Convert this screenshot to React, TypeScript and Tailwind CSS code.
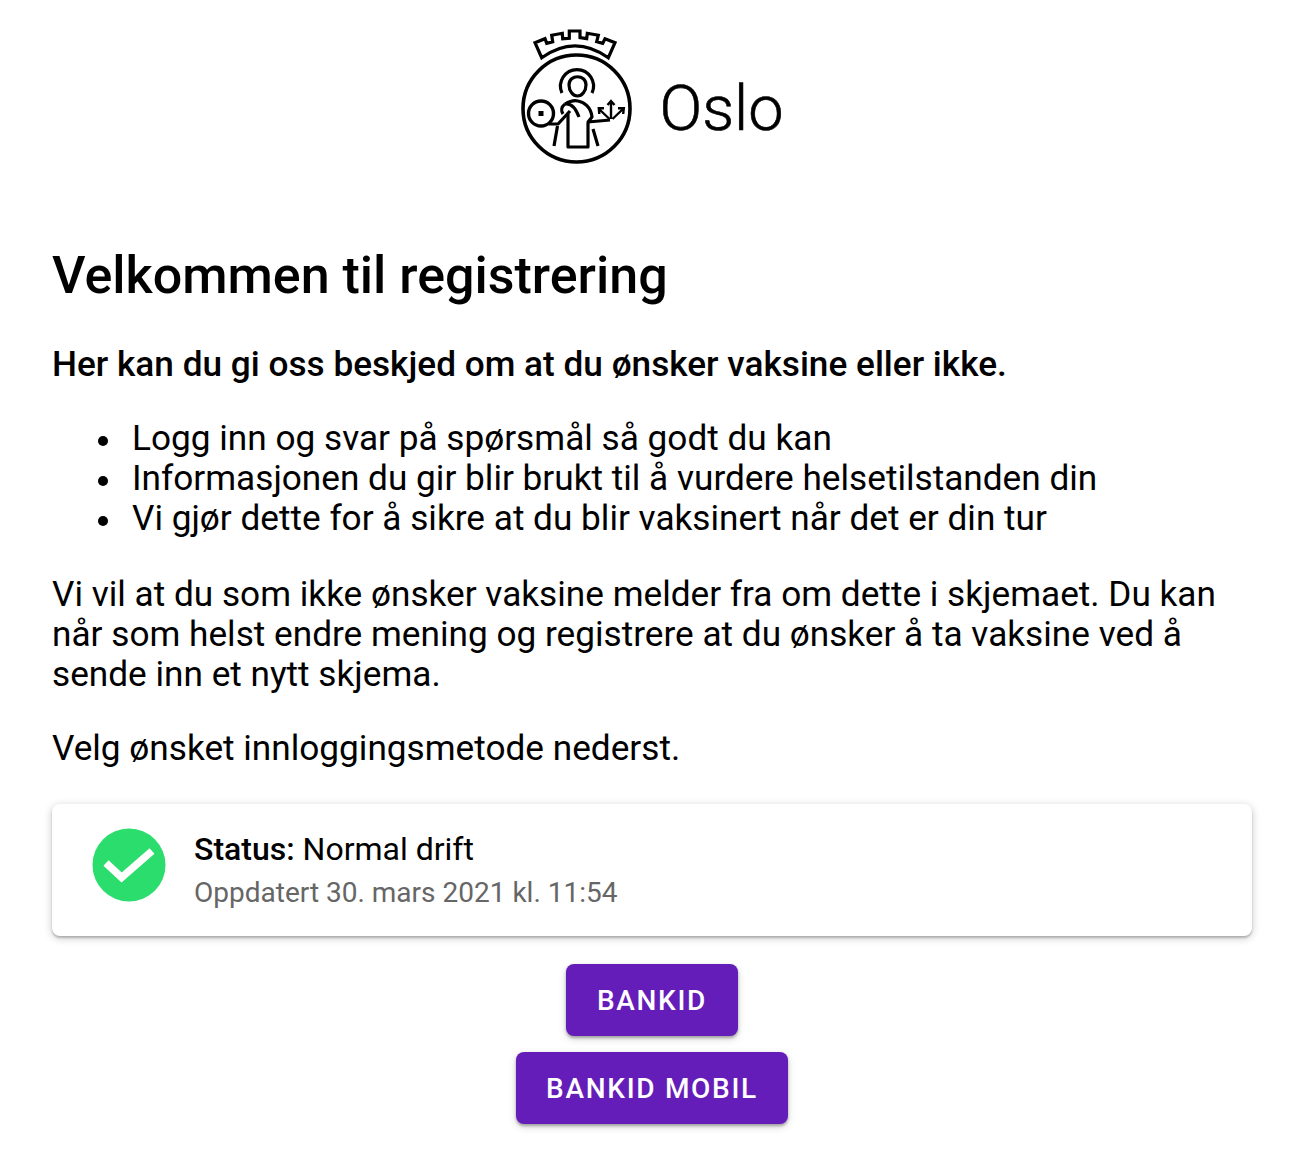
function OsloLogo() {
  return (
    <div className="flex items-center justify-center h-[140px]">
      <svg width="125" height="142" viewBox="515 27 125 142" fill="none" stroke="black" strokeWidth="3.2" className="self-start">
        {/* crown */}
        <path
          d="M535 41.7 L545 37.7 L546.7 42.3 L552.7 40.7 L551.7 34.3 L562.3 32.3 L562.7 37.7 L569.3 37.3 L569.3 30 L580 30 L580 36.7 L586.7 37.7 L587.3 32.3 L598.3 34.3 L596.7 40.7 L602.7 42.3 L605 37.7 L615 41.7 L608.3 56.7 Q575 33 541.7 56.7 Z"
          strokeLinejoin="miter"
        />
        {/* ring */}
        <circle cx="576.5" cy="107.5" r="53.5" strokeWidth="3.6" />
        {/* halo and head */}
        <path d="M562 92 A16.5 16.5 0 1 1 592 92" />
        <path d="M569 84 C569 73 586 73 586 84 C586 90 582 95 577.5 95 C573 95 569 90 569 84 Z" />
        {/* body */}
        <path d="M568 113 L568 146 L588 146 L588 122" strokeLinejoin="round" />
        <path d="M565 103 C570 100 574 99 578 100 C584 101 591 106 592 116 L588 121 L610 119" strokeLinejoin="round" />
        <path d="M565 103 C561 106 561 110 563 113 M565 103 C571 102 576 108 579 116" />
        {/* arm and robe */}
        <path d="M570 110 L558 123 L549 123" strokeLinejoin="round" />
        <path d="M557.5 125 L554 145 M593 128 L598 145" />
        {/* wheel */}
        <circle cx="541" cy="112.5" r="12.5" strokeWidth="3.4" />
        <rect x="538.5" y="110" width="5" height="5" fill="black" stroke="none" />
        {/* three arrows */}
        <path d="M611 118 L611 101 M607.5 104 L611 100 L614.5 104" strokeWidth="2.4" />
        <path d="M609.5 118 L599 108 M599.3 113 L598.8 107.2 L604 107.2" strokeWidth="2.4" />
        <path d="M612.5 118 L623 108 M618 107.2 L623.8 107.2 L623.2 113" strokeWidth="2.4" />
      </svg>
      <span className="font-['Roboto',sans-serif] text-[63px] font-light [-webkit-text-stroke:0.6px_black] leading-none text-black ml-[19px] mr-[5px] mt-[20px]">
        Oslo
      </span>
    </div>
  )
}

function StatusIcon() {
  return (
    <svg width="74" height="74" viewBox="0 0 74 74" className="shrink-0">
      <circle cx="37" cy="37" r="36.5" fill="#2BDD6C" />
      <path d="M14 35 L29.6 49.5 L60 23" fill="none" stroke="white" strokeWidth="7.5" />
    </svg>
  )
}

const bullets = [
  "Logg inn og svar på spørsmål så godt du kan",
  "Informasjonen du gir blir brukt til å vurdere helsetilstanden din",
  "Vi gjør dette for å sikre at du blir vaksinert når det er din tur",
]

export default function App() {
  return (
    <div className="min-h-screen bg-white pl-[52px] pr-[48px] pt-[28px] pb-[30px] text-black font-['Roboto',sans-serif] text-[35.2px] leading-[40px]">
      <OsloLogo />

      <h1 className="mt-[80px] text-[52px] leading-[56px] font-medium">Velkommen til registrering</h1>

      <p className="mt-[40px] font-medium">Her kan du gi oss beskjed om at du ønsker vaksine eller ikke.</p>

      <ul className="mt-[34px] pl-[46px]">
        {bullets.map((text) => (
          <li key={text} className="flex">
            <span className="mt-[18px] mr-[24px] h-[10px] w-[10px] shrink-0 rounded-full bg-black" />
            {text}
          </li>
        ))}
      </ul>

      <p className="mt-[36px]">
        Vi vil at du som ikke ønsker vaksine melder fra om dette i skjemaet. Du kan når som helst endre mening og
        registrere at du ønsker å ta vaksine ved å sende inn et nytt skjema.
      </p>

      <p className="mt-[34px]">Velg ønsket innloggingsmetode nederst.</p>

      {/* Status card */}
      <div className="mt-[36px] flex h-[132px] items-start gap-[28px] rounded-lg bg-white pl-[40px] pt-[25px] shadow-[0_2px_2px_rgba(0,0,0,0.2),0_2px_8px_rgba(0,0,0,0.22)]">
        <div className="-mt-[1px]">
          <StatusIcon />
        </div>
        <div className="text-[32px]">
          <div>
            <span className="font-medium">Status:</span> Normal drift
          </div>
          <div className="mt-[4px] text-[28px] leading-[40px] text-[#666666]">Oppdatert 30. mars 2021 kl. 11:54</div>
        </div>
      </div>

      <div className="mt-[28px] flex flex-col items-center gap-[16px]">
        <button className="h-[72px] min-w-[172px] rounded-lg bg-[#651DB9] px-[30px] pt-[2px] text-[28px] font-medium tracking-[1.7px] text-white shadow-[0_2px_3px_rgba(0,0,0,0.3),0_3px_8px_rgba(0,0,0,0.15)]">
          BANKID
        </button>
        <button className="h-[72px] min-w-[172px] rounded-lg bg-[#651DB9] px-[30px] pt-[2px] text-[28px] font-medium tracking-[1.7px] text-white shadow-[0_2px_3px_rgba(0,0,0,0.3),0_3px_8px_rgba(0,0,0,0.15)]">
          BANKID MOBIL
        </button>
      </div>
    </div>
  )
}
